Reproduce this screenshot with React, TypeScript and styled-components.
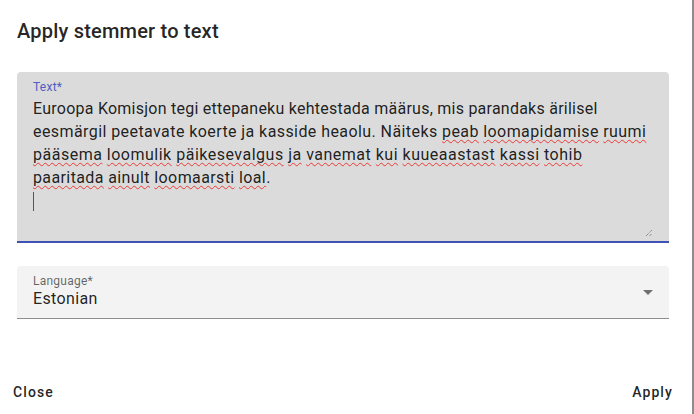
import React from "react";
import styled, { createGlobalStyle } from "styled-components";

const GlobalStyle = createGlobalStyle`
  html, body {
    margin: 0;
    padding: 0;
    background: #ffffff;
  }
  body {
    font-family: Roboto, "Liberation Sans", Arial, sans-serif;
    color: rgba(0, 0, 0, 0.87);
  }
  * {
    box-sizing: border-box;
  }
`;

const Dialog = styled.div`
  width: 694px;
  height: 414px;
  display: flex;
  flex-direction: column;
  background: #ffffff;
  border-right: 2px solid #8d8d8d;
`;

const Title = styled.h2`
  margin: 0;
  padding: 15px 16px 0 17px;
  font-size: 20px;
  font-weight: 500;
  line-height: 32px;
  letter-spacing: 0.2px;
  color: rgba(0, 0, 0, 0.87);
`;

const Content = styled.div`
  display: flex;
  flex-direction: column;
  gap: 23px;
  padding: 25px 0 0 17px;
`;

const FilledField = styled.div<{ $bg: string; $line: string; $lineWidth: number }>`
  position: relative;
  width: 652px;
  background: ${(p) => p.$bg};
  border-top-left-radius: 4px;
  border-top-right-radius: 4px;
  border-bottom: ${(p) => `${p.$lineWidth}px solid ${p.$line}`};
`;

const FieldLabel = styled.label<{ $color: string }>`
  position: absolute;
  left: 16px;
  top: 7px;
  font-size: 12px;
  line-height: 17px;
  letter-spacing: 0.25px;
  color: ${(p) => p.$color};
`;

const TextArea = styled.div`
  position: relative;
  margin: 25px 16px 6px 16px;
  height: 138px;
  font-size: 16px;
  line-height: 23px;
  color: rgba(0, 0, 0, 0.87);
`;

const Line = styled.div<{ $spacing: number }>`
  white-space: nowrap;
  height: 23px;
  letter-spacing: ${(p) => p.$spacing}px;
`;

const Misspelled = styled.span`
  text-decoration: underline wavy #ea3a36;
  text-decoration-thickness: 1.4px;
  text-underline-offset: 2px;
  text-decoration-skip-ink: none;
`;

const Caret = styled.span`
  display: inline-block;
  width: 1px;
  height: 19px;
  margin-top: 3px;
  background: #3f51b5;
  vertical-align: top;
`;

const ResizeHandle = styled.svg`
  position: absolute;
  right: 0;
  bottom: -2px;
  width: 8px;
  height: 8px;
`;

const SelectValue = styled.div`
  padding: 21px 16px 8px 16px;
  font-size: 16px;
  line-height: 23px;
  letter-spacing: 0.35px;
  color: rgba(0, 0, 0, 0.87);
`;

const DropIcon = styled.svg`
  position: absolute;
  right: 9px;
  top: calc(50% - 12px);
  width: 24px;
  height: 24px;
  fill: rgba(0, 0, 0, 0.54);
`;

const Actions = styled.div`
  margin-top: auto;
  display: flex;
  justify-content: space-between;
  padding: 0 11px 4px 5px;
`;

const TextButton = styled.button`
  border: none;
  background: transparent;
  padding: 6px 8px;
  font-family: Roboto, "Liberation Sans", Arial, sans-serif;
  font-size: 14px;
  font-weight: 500;
  line-height: 24.5px;
  letter-spacing: 1.1px;
  color: rgba(0, 0, 0, 0.87);
  cursor: pointer;
`;

const misspelled = new Set([
  "Näiteks",
  "peab",
  "loomapidamise",
  "ruumi",
  "pääsema",
  "loomulik",
  "päikesevalgus",
  "ja",
  "vanemat",
  "kui",
  "kuueaastast",
  "kassi",
  "tohib",
  "paaritada",
  "ainult",
  "loomaarsti",
  "loal",
]);

// letter spacing per line mirrors the reference's wrap widths
const lines = [
  { text: "Euroopa Komisjon tegi ettepaneku kehtestada määrus, mis parandaks ärilisel", from: 99, spacing: 0.24 },
  { text: "eesmärgil peetavate koerte ja kasside heaolu. Näiteks peab loomapidamise ruumi", from: 7, spacing: 0.42 },
  { text: "pääsema loomulik päikesevalgus ja vanemat kui kuueaastast kassi tohib", from: 0, spacing: 0.5 },
  { text: "paaritada ainult loomaarsti loal.", from: 0, spacing: 0.39 },
];

const renderLine = (text: string, startAt: number) => {
  const words = text.split(" ");
  return words.map((word, i) => {
    const sep = i < words.length - 1 ? " " : "";
    const core = word.replace(/[.,]$/, "");
    const tail = word.slice(core.length);
    if (i >= startAt && misspelled.has(core)) {
      return (
        <React.Fragment key={i}>
          <Misspelled>{core}</Misspelled>
          {tail}
          {sep}
        </React.Fragment>
      );
    }
    return (
      <React.Fragment key={i}>
        {word}
        {sep}
      </React.Fragment>
    );
  });
};

export default function App() {
  return (
    <>
      <GlobalStyle />
      <Dialog>
        <Title>Apply stemmer to text</Title>
        <Content>
          <FilledField $bg="#dbdbdb" $line="#3f51b5" $lineWidth={2}>
            <FieldLabel $color="#4f5fc0">Text*</FieldLabel>
            <TextArea role="textbox" aria-multiline="true">
              {lines.map((l, i) => (
                <Line key={i} $spacing={l.spacing}>
                  {renderLine(l.text, l.from)}
                </Line>
              ))}
              <Line $spacing={0}>
                <Caret />
              </Line>
              <ResizeHandle viewBox="0 0 8 8">
                <path d="M1 7L7 1M4.5 7L7 4.5" stroke="#555" strokeWidth="0.8" strokeDasharray="1 0.8" fill="none" />
              </ResizeHandle>
            </TextArea>
          </FilledField>

          <FilledField $bg="#f3f3f3" $line="#8f8f8f" $lineWidth={1}>
            <FieldLabel $color="rgba(0, 0, 0, 0.6)">Language*</FieldLabel>
            <SelectValue>Estonian</SelectValue>
            <DropIcon viewBox="0 0 24 24">
              <path d="M7 10l5 5 5-5z" />
            </DropIcon>
          </FilledField>
        </Content>

        <Actions>
          <TextButton>Close</TextButton>
          <TextButton>Apply</TextButton>
        </Actions>
      </Dialog>
    </>
  );
}
